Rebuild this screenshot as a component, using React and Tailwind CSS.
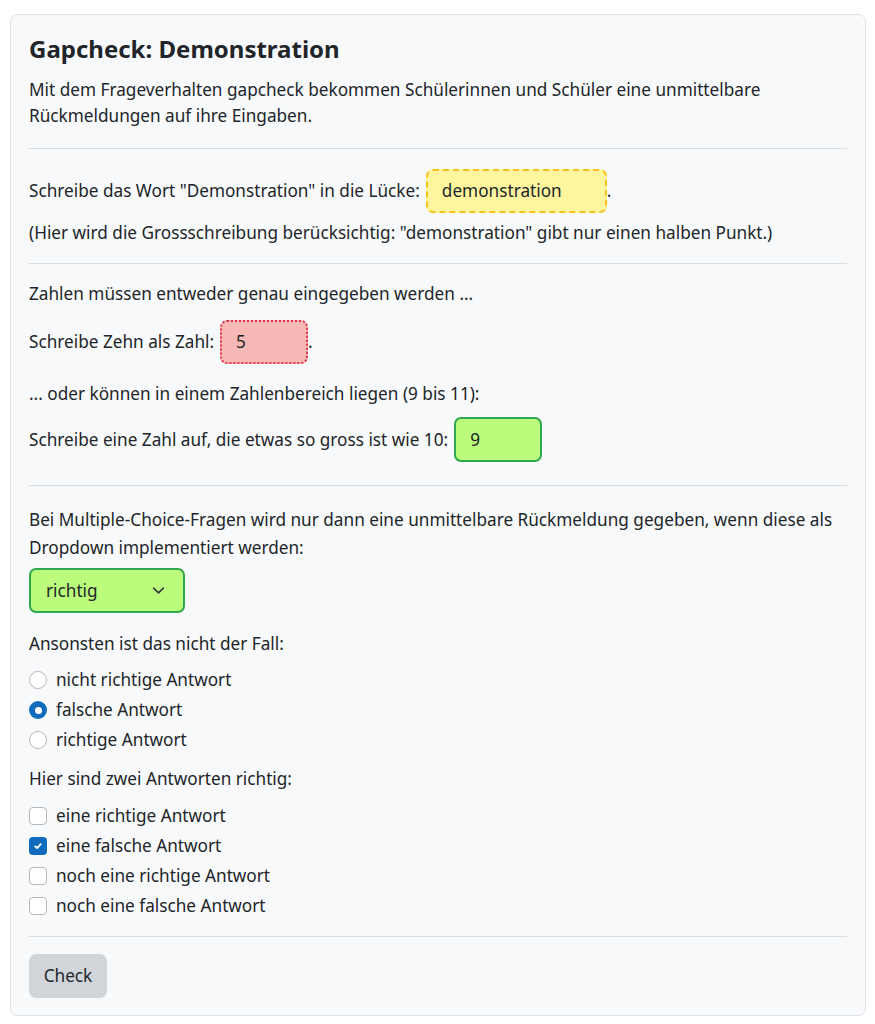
import React from "react";

function Radio({ checked, label }) {
  return (
    <div className="flex items-center h-[30px]">
      {checked ? (
        <span className="w-[18px] h-[18px] rounded-full bg-[#0f6cbd] flex items-center justify-center shrink-0">
          <span className="w-[7px] h-[7px] rounded-full bg-white" />
        </span>
      ) : (
        <span className="w-[18px] h-[18px] rounded-full border border-[#b4b9be] bg-white shrink-0" />
      )}
      <span className="ml-[9px]">{label}</span>
    </div>
  );
}

function Check({ checked, label }) {
  return (
    <div className="flex items-center h-[30px]">
      {checked ? (
        <span className="w-[18px] h-[18px] rounded-[4px] bg-[#0f6cbd] flex items-center justify-center shrink-0">
          <svg width="12" height="12" viewBox="0 0 20 20">
            <path d="M5.5 10.5l3 3 6-6.5" fill="none" stroke="#fff" strokeWidth="3" strokeLinecap="round" strokeLinejoin="round" />
          </svg>
        </span>
      ) : (
        <span className="w-[18px] h-[18px] rounded-[4px] border border-[#b4b9be] bg-white shrink-0" />
      )}
      <span className="ml-[9px]">{label}</span>
    </div>
  );
}

export default function App() {
  return (
    <div
      className="min-h-[1024px] bg-white pt-[14px] px-[10px] text-[#212529] text-[17.2px] leading-[26px]"
      style={{ fontFamily: '"Noto Sans", sans-serif' }}
    >
      <div className="w-[856px] h-[1002px] border border-[#dee2e6] rounded-[7px] bg-[#f8f9fa] px-[18px] pt-[18px]">
        <h1 className="text-[24px] font-bold leading-[32px] mb-[12px]">Gapcheck: Demonstration</h1>
        <p>
          Mit dem Frageverhalten gapcheck bekommen Schülerinnen und Schüler eine unmittelbare Rückmeldungen auf
          ihre Eingaben.
        </p>
        <hr className="border-t border-[#dadde0] mt-[19px] mb-[20px]" />
        <div className="flex items-center h-[44px]">
          <span>Schreibe das Wort "Demonstration" in die Lücke:</span>
          <span className="ml-[6px] w-[181px] h-[44px] border-2 border-dashed border-[#f7c21a] bg-[#fff59f] rounded-[7px] flex items-center px-[14px]">
            demonstration
          </span>
          <span>.</span>
        </div>
        <p className="mt-[7px]">
          (Hier wird die Grossschreibung berücksichtig: "demonstration" gibt nur einen halben Punkt.)
        </p>
        <hr className="border-t border-[#dadde0] mt-[17px] mb-[17px]" />
        <p>Zahlen müssen entweder genau eingegeben werden ...</p>
        <div className="flex items-center h-[44px] mt-[13px]">
          <span>Schreibe Zehn als Zahl:</span>
          <span className="ml-[6px] w-[88px] h-[44px] border-2 border-dotted border-[#e0334a] bg-[#f6b9b5] rounded-[7px] flex items-center px-[14px]">
            5
          </span>
          <span>.</span>
        </div>
        <p className="mt-[17px]">... oder können in einem Zahlenbereich liegen (9 bis 11):</p>
        <div className="flex items-center h-[45px] mt-[10px]">
          <span>Schreibe eine Zahl auf, die etwas so gross ist wie 10:</span>
          <span className="ml-[6px] w-[88px] h-[45px] border-2 border-[#2fa84f] bg-[#bbfc7c] rounded-[7px] flex items-center px-[14px]">
            9
          </span>
        </div>
        <hr className="border-t border-[#dadde0] mt-[23px] mb-[20px]" />
        <p className="leading-[28px]">
          Bei Multiple-Choice-Fragen wird nur dann eine unmittelbare Rückmeldung gegeben, wenn diese als Dropdown
          implementiert werden:
        </p>
        <div className="mt-[6px] w-[156px] h-[45px] border-2 border-[#2fa84f] bg-[#bbfc7c] rounded-[7px] flex items-center justify-between pl-[15px] pr-[18px]">
          <span>richtig</span>
          <svg width="13" height="13" viewBox="0 0 16 16">
            <path d="M2 5l6 6 6-6" fill="none" stroke="#343a40" strokeWidth="2" strokeLinecap="round" strokeLinejoin="round" />
          </svg>
        </div>
        <p className="mt-[18px]">Ansonsten ist das nicht der Fall:</p>
        <div className="mt-[8px]">
          <Radio label="nicht richtige Antwort" />
          <Radio checked label="falsche Antwort" />
          <Radio label="richtige Antwort" />
        </div>
        <p className="mt-[11px]">Hier sind zwei Antworten richtig:</p>
        <div className="mt-[9px]">
          <Check label="eine richtige Antwort" />
          <Check checked label="eine falsche Antwort" />
          <Check label="noch eine richtige Antwort" />
          <Check label="noch eine falsche Antwort" />
        </div>
        <hr className="border-t border-[#dadde0] mt-[15px] mb-[17px]" />
        <button className="w-[78px] h-[44px] rounded-[7px] bg-[#d1d5da] text-[#212529]">Check</button>
      </div>
    </div>
  );
}
